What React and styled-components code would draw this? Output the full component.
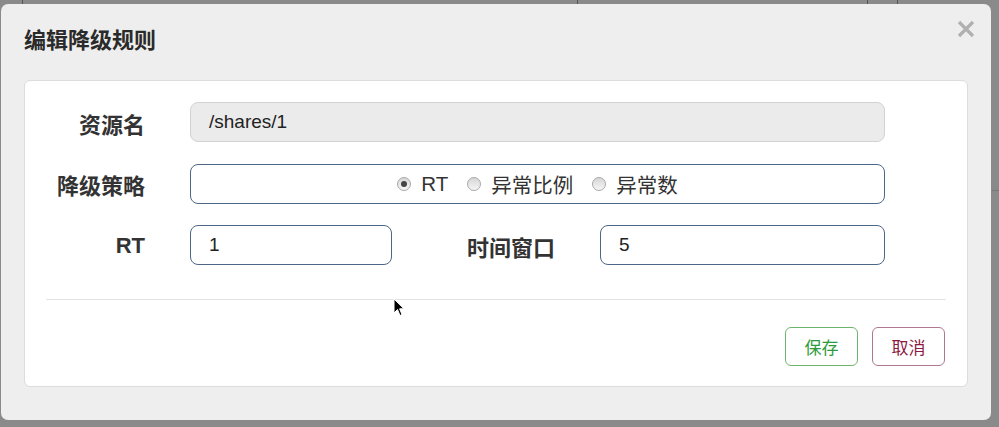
import React from "react";
import styled, { createGlobalStyle } from "styled-components";

const GlobalStyle = createGlobalStyle`
  html, body {
    margin: 0;
    padding: 0;
    background: #8a8a8a;
    font-family: "Liberation Sans", "Noto Sans CJK SC", sans-serif;
    overflow: hidden;
  }
`;

const Backdrop = styled.div`
  width: 999px;
  height: 427px;
  background:
    linear-gradient(#555, #555) 22px 0 / 1px 4px no-repeat,
    linear-gradient(#555, #555) 577px 0 / 1px 4px no-repeat,
    linear-gradient(#555, #555) 867px 0 / 1px 4px no-repeat,
    linear-gradient(#555, #555) 897px 0 / 1px 4px no-repeat,
    linear-gradient(#777, #777) 992px 190px / 7px 1px no-repeat,
    #8a8a8a;
  padding: 4px 0 0 1px;
  box-sizing: border-box;
`;

const Modal = styled.div`
  position: relative;
  width: 990px;
  height: 416px;
  background: #eeeeee;
  border-radius: 7px;
  box-sizing: border-box;
  display: flex;
  flex-direction: column;
`;

const Header = styled.div`
  height: 76px;
  display: flex;
  justify-content: space-between;
  align-items: flex-start;
  padding: 0 16px 0 23px;
`;

const Title = styled.h4`
  margin: 24px 0 0;
  font-size: 22px;
  line-height: 26px;
  font-weight: bold;
  color: #2a2a2a;
`;

const Close = styled.button`
  margin-top: 16px;
  padding: 0;
  border: none;
  background: none;
  width: 18px;
  height: 18px;
  display: flex;
  cursor: pointer;
`;

const Card = styled.div`
  margin-left: 23px;
  width: 944px;
  height: 307px;
  box-sizing: border-box;
  background: #fff;
  border: 1px solid #dcdcdc;
  border-radius: 6px;
  padding: 21px 21px 20px;
  display: flex;
  flex-direction: column;
`;

const Form = styled.div`
  display: flex;
  flex-direction: column;
  gap: 21.5px;
  padding-right: 61px;
`;

const Row = styled.div`
  display: grid;
  grid-template-columns: ${({ $cols }) => $cols || "99px 1fr"};
  column-gap: 45px;
  align-items: center;
  height: 40px;
`;

const Label = styled.label`
  text-align: right;
  font-size: 22px;
  font-weight: bold;
  color: #333;
  padding-top: 1px;
  white-space: nowrap;
`;

const Input = styled.div`
  height: 40px;
  box-sizing: border-box;
  border: 1px solid ${({ $disabled }) => ($disabled ? "#d2d2d2" : "#4d6786")};
  background: ${({ $disabled }) => ($disabled ? "#ebebeb" : "#fff")};
  border-radius: 8px;
  padding: 0 18px;
  display: flex;
  align-items: center;
  font-size: 19px;
  color: #222;
`;

const RadioGroup = styled(Input)`
  justify-content: center;
  gap: 19px;
`;

const RadioItem = styled.span`
  display: inline-flex;
  align-items: center;
  gap: 10px;
  font-size: 20.5px;
  color: #333;
`;

const RadioDot = styled.span`
  width: 14px;
  height: 14px;
  box-sizing: border-box;
  border-radius: 50%;
  border: 1px solid #a8a8a8;
  background: linear-gradient(#d6d6d6, #f6f6f6);
  display: inline-flex;
  align-items: center;
  justify-content: center;
  &::after {
    content: "";
    width: 6px;
    height: 6px;
    border-radius: 50%;
    background: ${({ $checked }) => ($checked ? "#444" : "transparent")};
  }
`;

const Divider = styled.hr`
  margin: 34px 0 0;
  border: none;
  border-top: 1px solid #e3e3e3;
`;

const Footer = styled.div`
  display: flex;
  justify-content: flex-end;
  gap: 14px;
  padding-top: 27px;
  padding-right: 1px;
`;

const Button = styled.button`
  width: 73px;
  height: 39px;
  border-radius: 6px;
  background: #fff;
  font-family: inherit;
  font-size: 17px;
  border: 1px solid ${({ $tone }) => ($tone === "ok" ? "#6db56d" : "#b07890")};
  color: ${({ $tone }) => ($tone === "ok" ? "#2f9a3c" : "#8c1a40")};
  cursor: pointer;
`;

const Cursor = styled.svg`
  position: absolute;
  left: 392px;
  top: 294px;
`;

const Radio = ({ checked, children }) => (
  <RadioItem>
    <RadioDot $checked={checked} />
    {children}
  </RadioItem>
);

export default function App() {
  return (
    <>
      <GlobalStyle />
      <Backdrop>
        <Modal>
          <Header>
            <Title>编辑降级规则</Title>
            <Close aria-label="close">
              <svg width="18" height="18" viewBox="0 0 18 18">
                <path d="M2 2 L16 16 M16 2 L2 16" stroke="#b0b0b0" strokeWidth="3.2" />
              </svg>
            </Close>
          </Header>
          <Card>
            <Form>
              <Row>
                <Label>资源名</Label>
                <Input $disabled>/shares/1</Input>
              </Row>
              <Row>
                <Label>降级策略</Label>
                <RadioGroup>
                  <Radio checked>RT</Radio>
                  <Radio>异常比例</Radio>
                  <Radio>异常数</Radio>
                </RadioGroup>
              </Row>
              <Row $cols="99px 202px 118px 1fr">
                <Label>RT</Label>
                <Input>1</Input>
                <Label>时间窗口</Label>
                <Input>5</Input>
              </Row>
            </Form>
            <Divider />
            <Footer>
              <Button $tone="ok">保存</Button>
              <Button $tone="cancel">取消</Button>
            </Footer>
          </Card>
          <Cursor width="12" height="19" viewBox="0 0 12 19">
            <path d="M1 1 L1 15 L4.5 11.5 L7 17.5 L9 16.6 L6.6 10.8 L11 10.8 Z" fill="#000" stroke="#fff" strokeWidth="1" />
          </Cursor>
        </Modal>
      </Backdrop>
    </>
  );
}
